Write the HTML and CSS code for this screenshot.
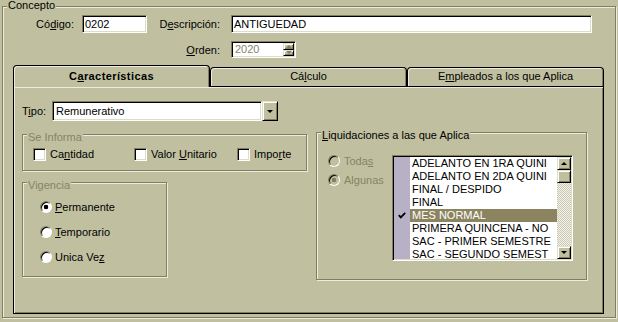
FILE: index.html
```html
<!DOCTYPE html>
<html lang="es">

<head>
    <meta charset="UTF-8" />
    <title>Concepto</title>
    <link rel="stylesheet" href="styles.css">
</head>

<body>
    <div class="group concepto">
        <span class="caption">Concepto</span>

        <div class="row row1">
            <label class="lbl lbl-cod">Có<u>d</u>igo:</label>
            <div class="field f-cod">0202</div>
            <label class="lbl lbl-desc">D<u>e</u>scripción:</label>
            <div class="field f-desc">ANTIGUEDAD</div>
        </div>

        <div class="row row2">
            <label class="lbl lbl-desc"><u>O</u>rden:</label>
            <div class="field spin">
                <span class="spin-val">2020</span>
                <div class="spin-btns">
                    <div class="btn spin-btn"><span class="arr-up grey"></span></div>
                    <div class="btn spin-btn"><span class="arr-down grey"></span></div>
                </div>
            </div>
        </div>

        <div class="tabctl">
            <div class="tabbar">
                <div class="tab active">C<u>a</u>racterísticas</div>
                <div class="tab">Cá<u>l</u>culo</div>
                <div class="tab">E<u>m</u>pleados a los que Aplica</div>
            </div>

            <div class="panel">
                <div class="tipo-row">
                    <label class="lbl lbl-tipo">T<u>i</u>po:</label>
                    <div class="combo">
                        <div class="field combo-field">Remunerativo</div>
                        <div class="btn combo-btn"><span class="arr-down"></span></div>
                    </div>
                </div>

                <div class="cols">
                    <div class="col-left">
                        <div class="group se-informa">
                            <span class="caption disabled">Se Informa</span>
                            <div class="chk-item w1"><span class="check"></span><span>Ca<u>n</u>tidad</span></div>
                            <div class="chk-item w2"><span class="check"></span><span>Valor <u>U</u>nitario</span></div>
                            <div class="chk-item"><span class="check"></span><span>Impo<u>r</u>te</span></div>
                        </div>

                        <div class="group vigencia">
                            <span class="caption disabled">Vigencia</span>
                            <div class="opts">
                                <div class="opt"><span class="radio on"></span><span><u>P</u>ermanente</span></div>
                                <div class="opt"><span class="radio"></span><span><u>T</u>emporario</span></div>
                                <div class="opt"><span class="radio"></span><span>Unica Ve<u>z</u></span></div>
                            </div>
                        </div>
                    </div>

                    <div class="group liquida">
                        <span class="caption"><u>L</u>iquidaciones a las que Aplica</span>
                        <div class="opts opts-liq">
                            <div class="opt off"><span class="radio"></span><span>Toda<u>s</u></span></div>
                            <div class="opt off"><span class="radio on"></span><span>Algunas</span></div>
                        </div>

                        <div class="listbox">
                            <div class="list-items">
                                <div class="item"><span class="mark"></span><span class="txt">ADELANTO EN 1RA QUINI</span></div>
                                <div class="item"><span class="mark"></span><span class="txt">ADELANTO EN 2DA QUINI</span></div>
                                <div class="item"><span class="mark"></span><span class="txt">FINAL / DESPIDO</span></div>
                                <div class="item"><span class="mark"></span><span class="txt">FINAL</span></div>
                                <div class="item sel">
                                    <span class="mark">
                                        <svg width="8" height="7" viewBox="0 0 8 7"><polyline points="0.8,3.2 2.8,5.4 7.2,0.8" fill="none" stroke="#000" stroke-width="1.8"/></svg>
                                    </span>
                                    <span class="txt">MES NORMAL</span>
                                </div>
                                <div class="item"><span class="mark"></span><span class="txt">PRIMERA QUINCENA - NO</span></div>
                                <div class="item"><span class="mark"></span><span class="txt">SAC - PRIMER SEMESTRE</span></div>
                                <div class="item"><span class="mark"></span><span class="txt">SAC - SEGUNDO SEMEST</span></div>
                            </div>
                            <div class="vscroll">
                                <div class="btn sbtn"><span class="arr-up"></span></div>
                                <div class="btn thumb"></div>
                                <div class="track"></div>
                                <div class="btn sbtn"><span class="arr-down"></span></div>
                            </div>
                        </div>
                    </div>
                </div>
            </div>
        </div>
    </div>
</body>

</html>
```

FILE: styles.css
```css
body {
    margin: 0;
    width: 618px;
    height: 322px;
    overflow: hidden;
    background: #c0c0a0;
    font-family: "Liberation Sans", Arial, sans-serif;
    font-size: 11px;
    color: #000;
}

u {
    text-underline-offset: 1px;
}

/* marcos (group box) */
.group {
    position: relative;
    box-sizing: border-box;
    border: 1px solid #808060;
    box-shadow: inset 1px 1px 0 #ecece0, 1px 1px 0 #ecece0;
}

.caption {
    position: absolute;
    top: -4px;
    left: 4px;
    padding: 0 1px;
    background: #c0c0a0;
    line-height: 13px;
    white-space: nowrap;
}

.disabled,
.off {
    color: #848468;
}

.concepto {
    margin: 6px 0 0 2px;
    width: 614px;
    height: 312px;
    padding-top: 8px;
}

.concepto > .caption {
    top: -8px;
}

/* filas de arriba */
.row {
    display: flex;
    align-items: center;
}

.row1 {
    height: 18px;
}

.row2 {
    margin-top: 8px;
    padding-left: 144px;
}

.lbl {
    flex: none;
    text-align: right;
    white-space: nowrap;
}

.lbl-cod {
    width: 71px;
    margin-right: 8px;
}

.lbl-desc {
    width: 73px;
    margin-right: 11px;
}

.field {
    box-sizing: border-box;
    height: 18px;
    background: #fff;
    border: 1px solid;
    border-color: #808060 #fff #fff #808060;
    box-shadow: inset 1px 1px 0 #000, inset -1px -1px 0 #dcdcc8;
    padding: 2px 2px 0;
    line-height: 13px;
    white-space: nowrap;
}

.f-cod {
    width: 65px;
}

.f-desc {
    width: 361px;
}

.spin {
    display: flex;
    width: 65px;
    height: 17px;
    padding: 1px 1px 1px 3px;
}

.spin-val {
    flex: 1;
    color: #848468;
    line-height: 13px;
}

.spin-btns {
    display: flex;
    flex-direction: column;
    width: 11px;
}

.spin-btn {
    flex: 1;
}

/* botones en relieve */
.btn {
    box-sizing: border-box;
    display: flex;
    align-items: center;
    justify-content: center;
    background: #c0c0a0;
    border: 1px solid;
    border-color: #e0e0d0 #000 #000 #e0e0d0;
    box-shadow: inset 1px 1px 0 #fff, inset -1px -1px 0 #808060;
}

.arr-up,
.arr-down {
    width: 0;
    height: 0;
    border-left: 3px solid transparent;
    border-right: 3px solid transparent;
}

.arr-up {
    border-bottom: 3px solid #000;
}

.arr-down {
    border-top: 3px solid #000;
}

.arr-up.grey {
    border-bottom-color: #808060;
}

.arr-down.grey {
    border-top-color: #808060;
}

/* pestañas */
.tabctl {
    margin: 7px 0 0 10px;
    width: 591px;
}

.tabbar {
    display: flex;
    align-items: flex-end;
    height: 21px;
}

.tab {
    box-sizing: border-box;
    width: 197px;
    height: 19px;
    border: 1px solid #000;
    border-bottom: 0;
    border-radius: 4px 4px 0 0;
    box-shadow: inset 1px 1px 0 #ecece0, inset -1px 0 0 #808060;
    text-align: center;
    line-height: 17px;
    white-space: nowrap;
}

.tab.active {
    position: relative;
    z-index: 1;
    height: 22px;
    margin-bottom: -1px;
    background: #c0c0a0;
    font-weight: bold;
    letter-spacing: 0.4px;
    line-height: 20px;
}

.panel {
    box-sizing: border-box;
    height: 228px;
    border: 1px solid #000;
    box-shadow: inset 1px 1px 0 #ecece0, inset -1px -1px 0 #808060;
    padding: 14px 0 0 8px;
}

.tipo-row {
    display: flex;
    align-items: center;
    height: 20px;
}

.lbl-tipo {
    width: 30px;
    text-align: left;
}

.combo {
    display: flex;
    width: 226px;
    height: 20px;
}

.combo-field {
    flex: 1;
    height: 20px;
    padding: 3px 3px 0;
}

.combo-btn {
    width: 16px;
}

.cols {
    display: flex;
    margin-top: 11px;
}

.col-left {
    margin-top: 2px;
    width: 285px;
}

/* Se Informa */
.se-informa {
    display: flex;
    height: 37px;
    padding: 13px 0 0 10px;
}

.chk-item {
    display: flex;
    align-items: flex-start;
    line-height: 13px;
    white-space: nowrap;
}

.w1 {
    width: 101px;
}

.w2 {
    width: 103px;
}

.check {
    flex: none;
    box-sizing: border-box;
    width: 13px;
    height: 13px;
    margin-right: 4px;
    background: #fff;
    border: 1px solid;
    border-color: #808060 #fff #fff #808060;
    box-shadow: inset 1px 1px 0 #000, inset -1px -1px 0 #dcdcc8;
}

/* Vigencia */
.vigencia {
    margin-top: 11px;
    width: 145px;
    height: 95px;
    padding: 18px 0 0 17px;
}

.opts {
    display: flex;
    flex-direction: column;
    gap: 13px;
}

.opt {
    display: flex;
    align-items: center;
    gap: 3px;
    height: 12px;
    white-space: nowrap;
}

.radio {
    flex: none;
    box-sizing: border-box;
    width: 12px;
    height: 12px;
    border-radius: 50%;
    border: 1px solid;
    border-color: #808060 #fff #fff #808060;
    box-shadow: inset 1px 1px 0 #000;
    background: #fff;
}

.radio.on {
    background: radial-gradient(circle, #000 2px, #fff 2.6px);
}

.off .radio {
    background: #c0c0a0;
}

.off .radio.on {
    background: radial-gradient(circle, #808060 2px, #c0c0a0 2.6px);
}

/* Liquidaciones */
.liquida {
    display: flex;
    margin-left: 9px;
    width: 271px;
    height: 148px;
    padding: 22px 0 0 11px;
}

.opts-liq {
    width: 64px;
    gap: 7px;
}

.opts-liq .opt {
    gap: 4px;
}

.listbox {
    display: flex;
    box-sizing: border-box;
    width: 181px;
    height: 106px;
    padding: 1px;
    border: 1px solid;
    border-color: #808060 #fff #fff #808060;
    box-shadow: inset 1px 1px 0 #000, inset -1px -1px 0 #dcdcc8;
    background: #fff;
}

.list-items {
    flex: 1;
    overflow: hidden;
    background: linear-gradient(to right, #b8b0c4 16px, #fff 16px);
}

.item {
    display: flex;
    height: 13px;
    line-height: 13px;
    white-space: nowrap;
}

.mark {
    flex: none;
    display: flex;
    align-items: center;
    justify-content: center;
    width: 16px;
}

.txt {
    flex: 1;
    padding-left: 2px;
    overflow: hidden;
}

.sel .txt {
    background: #8c8460;
    color: #fff;
}

.vscroll {
    display: flex;
    flex-direction: column;
    width: 14px;
    background: repeating-conic-gradient(#f4f4ec 0 25%, #c8c8b0 0 50%) 0 0 / 2px 2px;
}

.sbtn,
.thumb {
    flex: none;
    height: 13px;
}

.track {
    flex: 1;
}
```
